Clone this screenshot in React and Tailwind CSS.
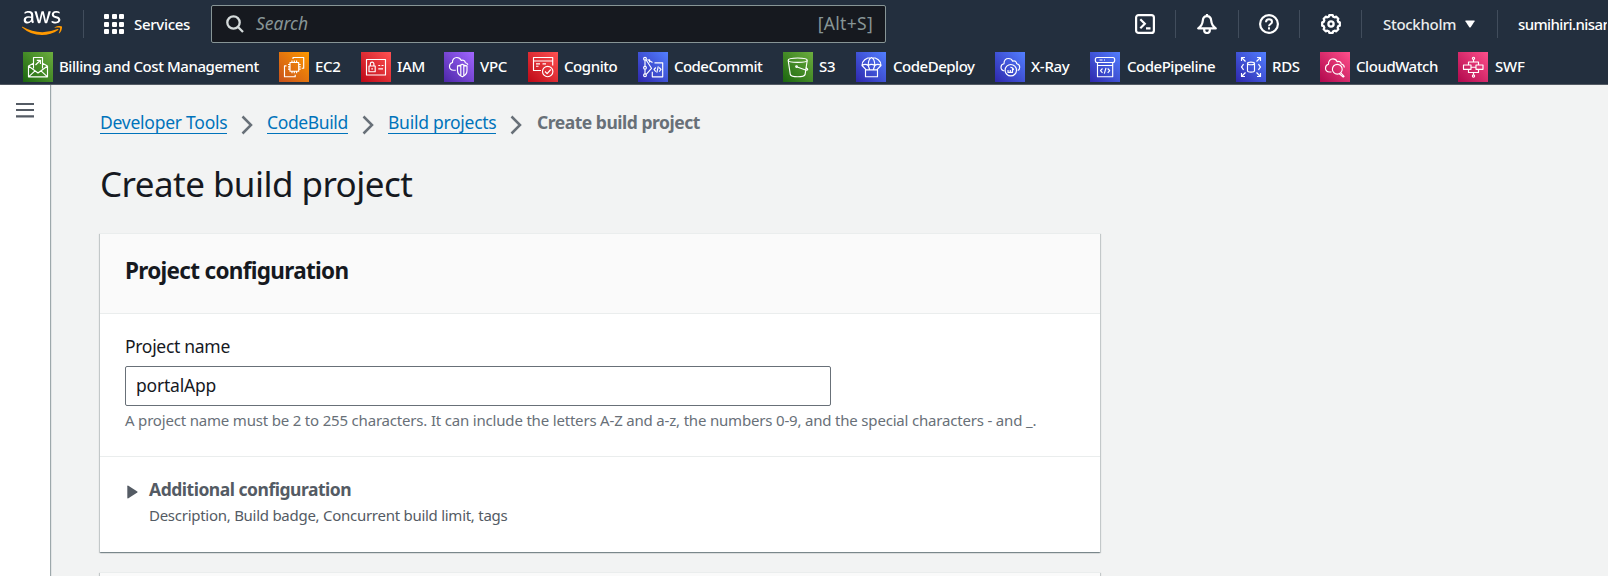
import { FaAws } from "react-icons/fa";

const GREEN = "bg-linear-[45deg,#1b660f,#6cae3e]";
const ORANGE = "bg-linear-[45deg,#c8511b,#ff9900]";
const RED = "bg-linear-[45deg,#bd0816,#ff5252]";
const PURPLE = "bg-linear-[45deg,#4d27a8,#a166ff]";
const BLUE = "bg-linear-[45deg,#2e27ad,#527fff]";
const PINK = "bg-linear-[45deg,#b0084d,#ff4f8b]";

const favorites = [
  {
    name: "Billing and Cost Management",
    bg: GREEN,
    slot: "w-[256px]",
    text: "tracking-[-0.44px]",
    icon: (
      <>
        <path d="M10.5 16.5V5.5h9v11M5.5 14v10.8h19V14L15 21zM5.5 14l5-2.7M24.5 14l-5-2.7M5.5 24.8l6.5-6M24.5 24.8l-6.5-6" />
        <path d="M12.5 13l4.7-4.5M13.8 8.3h3.6v3.6" />
      </>
    ),
  },
  {
    name: "EC2",
    bg: ORANGE,
    slot: "w-[82px]",
    text: "tracking-[-0.3px]",
    icon: (
      <>
        <path d="M11 10.5h8.7v8.7H11zM13 8.5v2M15.3 8.5v2M17.6 8.5v2M13 19.2v2M15.3 19.2v2M17.6 19.2v2M9 12.5h2M9 14.8h2M9 17.1h2M19.7 12.5h2M19.7 14.8h2M19.7 17.1h2" />
        <path d="M14 7V5.5h10.7v10.7h-2M7.5 13.8h-2v10.9h10.7v-2" />
      </>
    ),
  },
  {
    name: "IAM",
    bg: RED,
    slot: "w-[83px]",
    text: "tracking-[-0.3px]",
    icon: (
      <>
        <path d="M5.5 7.5h19v15.5h-19zM8 14h6.2v5.7H8zM9.3 14v-2.1a1.8 1.8 0 0 1 3.6 0V14M11.1 16v1.8" />
        <path d="M17.3 13.5h1.9M20.6 13.5h1.9M17.3 16.8h4.7" />
      </>
    ),
  },
  {
    name: "VPC",
    bg: PURPLE,
    slot: "w-[84px]",
    text: "tracking-[-0.3px]",
    icon: (
      <>
        <path d="M11.8 18.2H9.5c-2.4-.2-4-1.6-4-3.8 0-2 1.300-3.500 3-3.900-.3-2.700 1.700-5 4.300-5 2.300 0 3.700 1.300 4.500 3 1.900-1 3.800.2 4 2.200 1.300.2 2.200.9 2.600 2" />
        <path d="M18.300 12.300c-1.500 1.100-3 1.500-4.800 1.500v4.700c0 3 2 5 4.800 6.300 2.800-1.300 4.700-3.300 4.700-6.300v-4.700c-1.700 0-3.200-.4-4.700-1.500zM16.800 13.500v10M19.800 13.500v10" />
      </>
    ),
  },
  {
    name: "Cognito",
    bg: RED,
    slot: "w-[110px]",
    text: "tracking-[-0.44px]",
    icon: (
      <>
        <path d="M13 18.5H5.500v-13h19.200v8M5.500 9h19.200M8 11.800h4M8 14.200h2.500M14.500 11.800h3.500" />
        <circle cx="19.700" cy="19.500" r="5.200" />
        <path d="M17 19.500l2.100 2.200 3.700-4.200" />
      </>
    ),
  },
  {
    name: "CodeCommit",
    bg: BLUE,
    slot: "w-[145px]",
    text: "tracking-[-0.54px]",
    icon: (
      <>
        <circle cx="7" cy="6.700" r="1.400" />
        <circle cx="7" cy="15.800" r="1.400" />
        <circle cx="7" cy="23.300" r="1.400" />
        <path d="M7 8.200v6.200M7 17.200v4.700M8 7.800l5.500 8.500-5.300 6M9.500 7.500l5 3M11.500 7.300v3.200" />
        <path d="M16.500 10.800h8.200v14H14.300v-5M17.800 15.500l-1.800 2 1.800 2.100M21.200 15.500l1.800 2-1.800 2.100M20.300 14.300l-1.500 6.400" />
      </>
    ),
  },
  {
    name: "S3",
    bg: GREEN,
    slot: "w-[73px]",
    text: "tracking-[-0.3px]",
    icon: (
      <>
        <ellipse cx="14.700" cy="8.200" rx="9.500" ry="2.200" />
        <path d="M5.200 8.500L7.300 22.500c1 3 13.800 3 14.800 0L24.200 8.500M13.500 14.700l9 3.300c2 .6 2.900-.3 1.500-1.500-.5-.4-1-.6-1.500-.9" />
        <circle cx="13.500" cy="14.500" r=".8" />
      </>
    ),
  },
  {
    name: "CodeDeploy",
    bg: BLUE,
    slot: "w-[139px]",
    text: "ml-px tracking-[-0.48px]",
    icon: (
      <>
        <path d="M6 13.500C6 9 10 5.500 15.500 5.500S25 9 25 13.500c-2-1.500-4.300-1.500-6.200 0-2-1.300-4.600-1.300-6.600 0-1.900-1.500-4.200-1.500-6.200 0zM12.200 13.500c0-4 1.300-7 3.300-8 2 1 3.300 4 3.300 8M6 13.500l4 4.200M25 13.500l-4 4.200M12.200 13.500l1.500 4.200M18.800 13.500l-1.500 4.200M9.500 17.800h12v6.900h-12z" />
      </>
    ),
  },
  {
    name: "X-Ray",
    bg: BLUE,
    slot: "w-[95px]",
    text: "tracking-[-0.3px]",
    icon: (
      <>
        <path d="M9.500 19c-2-.4-3.500-1.700-3.500-3.800 0-1.800 1.300-3.200 3-3.500 0-3.400 2-5.200 4.500-5.200 2 0 3.500 1 4.200 2.700 2-.8 3.700.3 4 2.500 1.900.3 3 1.700 3 3.500 0 1.500-.7 2.700-2 3.400" />
        <circle cx="15.800" cy="18.200" r="5.700" />
        <path d="M13 18v2.400h4.500v-4M15.300 18v2.300M15.300 15.300a3 3 0 0 1 3.200 2.800" />
      </>
    ),
  },
  {
    name: "CodePipeline",
    bg: BLUE,
    slot: "w-[146px]",
    text: "ml-px tracking-[-0.48px]",
    icon: (
      <>
        <path d="M7 5.500h16c2.300 0 2.300 5 0 5H7c-2.300 0-2.300-5 0-5zM7.500 10.500v14.200h15.200V10.500M7.500 13.500h15.200M9.500 8h3M14 8h1" />
        <path d="M12.500 16.500l-2 2.200 2 2.200M17.700 16.500l2 2.200-2 2.200M16 15.800l-1.700 5.900" />
      </>
    ),
  },
  {
    name: "RDS",
    bg: BLUE,
    slot: "w-[84px]",
    text: "tracking-[-0.3px]",
    icon: (
      <>
        <path d="M5.500 9V5.500H9M5.500 5.500l4 4M21 5.500h3.500V9M24.500 5.500l-4 4M5.500 21v3.500H9M5.500 24.500l4-4M21 24.500h3.500V21M24.500 24.500l-4-4M7.500 12c-.6 1.300-1 2-2 3 1 1 1.400 1.700 2 3M22.500 12c.6 1.300 1 2 2 3-1 1-1.400 1.700-2 3" />
        <ellipse cx="15" cy="11.400" rx="3.500" ry="1.300" />
        <path d="M11.500 11.400v7.400c.5 1.700 6.500 1.700 7 0v-7.400" />
      </>
    ),
  },
  {
    name: "CloudWatch",
    bg: PINK,
    slot: "w-[138px]",
    text: "tracking-[-0.44px]",
    icon: (
      <>
        <path d="M11.500 20H9.500c-2.400-.2-4-1.600-4-3.800 0-2 1.300-3.500 3-3.900-.2-3.300 1.700-5.500 4.500-5.500 2 0 3.500 1 4.200 2.900 2.200-.9 3.800.2 4.100 2.300 1.800.4 2.900 1.700 3.100 3.500" />
        <circle cx="17.300" cy="17.200" r="4.900" />
        <path d="M20.800 20.800l3.300 3.500c-.3.600-.8.800-1.300.5l-3.600-3.200" />
      </>
    ),
  },
  {
    name: "SWF",
    bg: PINK,
    slot: "w-[80px]",
    text: "ml-px tracking-[-0.2px]",
    icon: (
      <>
        <circle cx="15.500" cy="6.300" r="1.100" />
        <circle cx="15.500" cy="24" r="1.100" />
        <path d="M15.500 7.500v2.500M15.500 20.500v2.300M10.500 13V10h10v3M10.500 17.300v3.200h10v-3.200M5.500 13h7.500v4.300H5.500zM18 13h7v4.300h-7zM13 15.200h5" />
      </>
    ),
  },
];

function Divider() {
  return <span className="h-[28px] w-px bg-[#414d5c]" />;
}

function Crumb({ children, className }) {
  return (
    <a className={"h-[25px] whitespace-nowrap border-b border-[#0073bb] text-[#0073bb] " + className}>{children}</a>
  );
}

function Chevron() {
  return (
    <svg className="mx-[14px] mt-[6px] h-[20px] w-[12px]" viewBox="0 0 12 20" fill="none" stroke="#687078" strokeWidth="2.500">
      <path d="M1.500 1.500L10 10l-8.500 8.500" />
    </svg>
  );
}

function TopBar() {
  return (
    <div className="flex h-[48px] items-center">
      <div className="relative ml-[22px] mt-[-2px] h-[32px] w-[40px]">
        <FaAws className="absolute inset-0 h-[32px] w-[40px] text-white [clip-path:inset(0_0_43%_0)]" />
        <FaAws className="absolute inset-0 h-[32px] w-[40px] text-[#ff9900] [clip-path:inset(57%_0_0_0)]" />
      </div>
      <span className="ml-[21px] h-[28px] w-px bg-[#414d5c]" />
      <div className="ml-[20px] grid grid-cols-3 gap-[2.500px]">
        {Array.from({ length: 9 }, (_, i) => (
          <span key={i} className="size-[5px] rounded-[1px] bg-white" />
        ))}
      </div>
      <span className="ml-[10px] w-[77px] text-[15px] font-medium leading-[20px] tracking-[-0.3px] text-white">Services</span>
      <div className="flex h-[38px] w-[675px] items-center rounded-[2px] border border-[#879596] bg-[#16191f] pl-[14px] pr-[12px] text-[17.500px] text-[#879596]">
        <svg className="h-[18px] w-[18px]" viewBox="0 0 18 18" fill="none" stroke="#d5dbdb" strokeWidth="2.300">
          <circle cx="7.500" cy="7.500" r="6.200" />
          <path d="M12 12l5 5" />
        </svg>
        <span className="ml-[12px] grow pb-[2px] italic leading-[24px]">Search</span>
        <span className="pb-[2px] leading-[24px] tracking-[0.300px]">[Alt+S]</span>
      </div>
      <div className="flex grow items-center text-white">
        <svg className="ml-[249px] mr-[20px] size-[20px] shrink-0" viewBox="0 0 20 20" fill="none" stroke="currentColor" strokeWidth="2.200">
          <rect x="1.100" y="1.100" width="17.800" height="17.800" rx="2.500" />
          <path d="M5.300 5.300l4.500 4.500-4.500 4.500M11 14.300h4.500" />
        </svg>
        <Divider />
        <svg className="mx-[21px] size-[20px] shrink-0" viewBox="0 0 20 20" fill="none" stroke="currentColor" strokeWidth="2.200" strokeLinejoin="round">
          <path d="M10 2.200c-2.600 0-4 1.800-4.200 4.500C5.500 10 4 12.500 1.200 14.400h17.600C16 12.500 14.500 10 14.200 6.700 14 4 12.600 2.200 10 2.200zM10 0v2.500" />
          <path d="M7.200 14.500v1.700a2.800 2.800 0 0 0 5.600 0v-1.700" />
        </svg>
        <Divider />
        <svg className="mx-[20px] size-[20px] shrink-0" viewBox="0 0 20 20" fill="none" stroke="currentColor" strokeWidth="2.200">
          <circle cx="10" cy="10" r="8.900" />
          <path d="M7 8.200C7 6.300 8.200 5.300 10 5.300s3 1 3 2.600c0 2-3 2.100-3 4.300M10 13.300v2.200" strokeWidth="2" />
        </svg>
        <Divider />
        <svg className="mx-[20.500px] size-[20px] shrink-0" viewBox="0 0 20 20" fill="none" stroke="currentColor" strokeWidth="2.300" strokeLinejoin="round">
          <path d="M8.300 1.200h3.400l.5 1.500 1.500.6 1.600-.6 2 2-.6 1.600.6 1.500 1.500.5v3.400l-1.500.5-.6 1.500.6 1.600-2 2-1.600-.6-1.500.6-.5 1.500H8.300l-.5-1.500-1.500-.6-1.600.6-2-2 .6-1.600-.6-1.500-1.500-.5V8.300l1.500-.5.600-1.500-.6-1.600 2-2 1.600.6 1.500-.6z" />
          <circle cx="10" cy="10" r="2.600" />
        </svg>
        <Divider />
        <span className="ml-[21px] w-[82px] text-[15px] font-medium leading-[20px] tracking-[-0.300px] text-[#eaeded]">Stockholm</span>
        <svg className="h-[8px] w-[10px]" viewBox="0 0 10 8" fill="currentColor">
          <path d="M.8.500h8.400q.800 0 .4.800L5.700 7.200q-.7.800-1.400 0L.4 1.300Q0 .5.800.5z" />
        </svg>
        <span className="ml-[22px] h-[28px] w-px bg-[#414d5c]" />
        <span className="ml-[20px] w-[89px] overflow-hidden whitespace-nowrap text-[15px] font-medium leading-[20px] tracking-[-0.600px]">sumihiri.nisan</span>
      </div>
    </div>
  );
}

function FavoritesBar() {
  return (
    <div className="flex h-[36px] pl-[23px] pt-[4px]">
      {favorites.map((f) => (
        <div key={f.name} className={"flex shrink-0 items-start gap-[6px] " + f.slot}>
          <svg className={"size-[30px] shrink-0 " + f.bg} viewBox="0 0 30 30" fill="none" stroke="#fff" strokeWidth="1.150" strokeLinejoin="round">
            {f.icon}
          </svg>
          <span className={"whitespace-nowrap text-[15px] font-medium leading-[28px] text-white " + f.text}>{f.name}</span>
        </div>
      ))}
    </div>
  );
}

const CARD_SHADOW = "shadow-[0_1px_1px_0_rgba(0,28,36,0.300),1px_1px_1px_0_rgba(0,28,36,0.150),-1px_1px_1px_0_rgba(0,28,36,0.150)]";

export default function App() {
  return (
    <div className="flex h-[576px] w-[1608px] flex-col overflow-hidden bg-[#f2f3f3] font-['Noto_Sans','Liberation_Sans',sans-serif] text-[#16191f]">
      <header className="h-[85px] shrink-0 border-b border-[#545b64] bg-[#232f3e]">
        <TopBar />
        <FavoritesBar />
      </header>
      <div className="flex grow">
        <aside className="w-[50px] shrink-0 bg-white pl-[16px] pt-[17px] shadow-[1px_0_1px_0_rgba(0,28,36,0.350)]">
          <svg className="h-[16px] w-[18px]" viewBox="0 0 18 16" stroke="#545b64" strokeWidth="2.200">
            <path d="M0 2h18M0 8h18M0 14.300h18" />
          </svg>
        </aside>
        <main className="flex w-[1050px] flex-col pl-[50px]">
          <nav className="flex h-[50px] pt-[24px] text-[17.500px] leading-[26px]">
            <Crumb className="w-[127px] tracking-[-0.250px]">Developer Tools</Crumb>
            <Chevron />
            <Crumb className="w-[81px] tracking-[-0.380px]">CodeBuild</Crumb>
            <Chevron />
            <Crumb className="w-[108px] tracking-[-0.270px]">Build projects</Crumb>
            <Chevron />
            <span className="ml-px font-bold tracking-[-0.480px] text-[#687078]">Create build project</span>
          </nav>
          <h1 className="mt-[26px] text-[35px] leading-[45px] tracking-[-0.550px]">Create build project</h1>
          <section className={"mt-[27px] h-[319px] shrink-0 border-t border-[#eaeded] bg-white " + CARD_SHADOW}>
            <div className="h-[80px] border-b border-[#eaeded] bg-[#fafafa] pl-[25px] pt-[23px]">
              <h2 className="text-[22.500px] font-bold leading-[28px] tracking-[-0.690px]">Project configuration</h2>
            </div>
            <div className="h-[143px] border-b border-[#eaeded] pl-[25px] pt-[18px]">
              <label className="block text-[17.500px] leading-[28px] tracking-[-0.300px]">Project name</label>
              <div className="mt-[6px] flex h-[40px] w-[706px] items-center rounded-[2px] border border-[#687078] pb-[2px] pl-[10px] text-[17.500px] leading-[28px] tracking-[-0.200px]">portalApp</div>
              <p className="mt-[4px] whitespace-nowrap text-[15px] leading-[20px] tracking-[-0.185px] text-[#687078]">A project name must be 2 to 255 characters. It can include the letters A-Z and a-z, the numbers 0-9, and the special characters - and _.</p>
            </div>
            <div className="flex pl-[27px] pt-[18px] text-[#545b64]">
              <svg className="mt-[10px] h-[14px] w-[11px]" viewBox="0 0 11 14" fill="currentColor">
                <path d="M.3 1.200Q.300 0 1.400.7L10.300 6.400q.7.600 0 1.200L1.400 13.300Q.300 14 .3 12.800z" />
              </svg>
              <div className="ml-[11px]">
                <h3 className="text-[17.500px] font-bold leading-[28px] tracking-[-0.480px]">Additional configuration</h3>
                <p className="text-[15px] leading-[24px] tracking-[-0.270px]">Description, Build badge, Concurrent build limit, tags</p>
              </div>
            </div>
          </section>
          <section className={"mt-[20px] h-[80px] shrink-0 border-t border-[#eaeded] bg-[#fafafa] " + CARD_SHADOW} />
        </main>
      </div>
    </div>
  );
}
